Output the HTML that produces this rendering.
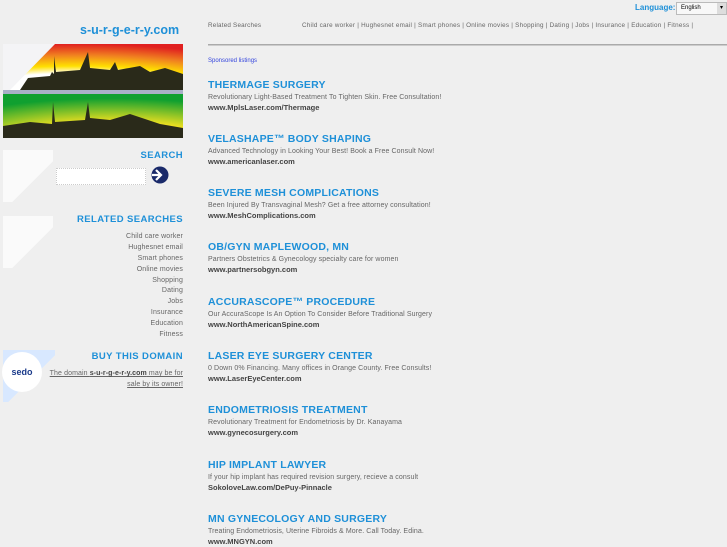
<!DOCTYPE html>
<html><head><meta charset="utf-8"><style>
body{margin:0;width:727px;height:545px;overflow:hidden;background:#efefef;font-family:"Liberation Sans",sans-serif;position:relative}
.a{position:absolute}
.r{text-align:right}
.h{color:#1e90d8;font-weight:bold;font-size:9.5px;letter-spacing:.4px}
.rs div{font-size:7px;color:#666;height:10.9px;line-height:10.9px;letter-spacing:.15px}
.t{font-size:10.5px;font-weight:bold;color:#1e90d8;letter-spacing:.2px;line-height:12px}
.d{font-size:7px;color:#666;margin-top:2px;line-height:9px;letter-spacing:.1px}
.u{font-size:7.5px;font-weight:bold;color:#444;margin-top:1px;line-height:10px}
.l{position:absolute;left:208px}
</style></head><body>
<div class="a" style="left:80px;top:23px;font-size:12.5px;font-weight:bold;color:#1e90d8">s-u-r-g-e-r-y.com</div>
<svg class="a" style="left:0;top:42px" width="186" height="100">
<defs><radialGradient id="g1" cx="0.4" cy="1.6" r="1.6"><stop offset="0.6" stop-color="#fff"/><stop offset="0.7" stop-color="#ffe000"/><stop offset="0.85" stop-color="#f08020"/><stop offset="1" stop-color="#e02020"/></radialGradient>
<radialGradient id="g2" cx="0.6" cy="1.3" r="1.2"><stop offset="0.35" stop-color="#fff"/><stop offset="0.55" stop-color="#f0e020"/><stop offset="1" stop-color="#10a030"/></radialGradient></defs>
<rect x="3" y="2" width="180" height="46" fill="url(#g1)"/>
<polygon points="3,2 55,2 10,48 3,48" fill="#f4f4f6"/>
<path d="M20 48 L28 36 L50 34 L52 30 L54 32 L54 14 L56 30 L80 28 L88 10 L90 26 L110 28 L115 20 L118 28 L140 24 L150 30 L165 26 L183 32 L183 48Z" fill="#2a2a1a"/>
<rect x="3" y="48" width="180" height="4" fill="#a9b0c8"/>
<rect x="3" y="52" width="180" height="44" fill="url(#g2)"/>
<path d="M3 96 L3 84 L30 80 L52 82 L53 60 L55 80 L85 78 L88 60 L90 76 L110 78 L130 72 L160 82 L183 86 L183 96Z" fill="#2a2a1a"/>
</svg>
<div class="a" style="left:3px;top:150px;width:50px;height:52px;background:linear-gradient(135deg,#fafafa 0,#fafafa 60%,#efefef 60%)"></div>
<div class="a r h" style="right:544px;top:150px">SEARCH</div>
<div class="a" style="left:56px;top:168px;width:88px;height:15px;background:#fff;border:1px dotted #ccc"></div>
<svg class="a" style="left:150px;top:166px" width="20" height="18"><circle cx="10" cy="9" r="8.5" fill="#1a2a6a"/><path d="M2 9h8M6 4l5 5-5 5" stroke="#fff" stroke-width="2.2" fill="none"/></svg>
<div class="a" style="left:3px;top:216px;width:50px;height:52px;background:linear-gradient(135deg,#fafafa 0,#fafafa 60%,#efefef 60%)"></div>
<div class="a r h" style="right:544px;top:214px">RELATED SEARCHES</div>
<div class="a r rs" style="right:544px;top:232px"><div>Child care worker</div><div>Hughesnet email</div><div>Smart phones</div><div>Online movies</div><div>Shopping</div><div>Dating</div><div>Jobs</div><div>Insurance</div><div>Education</div><div>Fitness</div></div>
<div class="a" style="left:3px;top:350px;width:52px;height:52px;background:linear-gradient(135deg,#d8e8ff 0,#d8e8ff 55%,#efefef 55%)"></div>
<div class="a" style="left:2px;top:352px;width:40px;height:40px;border-radius:50%;background:#fff;font-size:9px;font-weight:bold;color:#1a3a8a;text-align:center;line-height:40px">sedo</div>
<div class="a r h" style="right:544px;top:351px">BUY THIS DOMAIN</div>
<div class="a r" style="right:544px;top:368px;font-size:7px;color:#666;line-height:11px;text-decoration:underline;letter-spacing:.1px">The domain <b style="color:#444">s-u-r-g-e-r-y.com</b> may be for<br>sale by its owner!</div>
<div class="a" style="left:635px;top:3px;font-size:8px;font-weight:bold;color:#1e90d8">Language:</div>
<div class="a" style="left:676px;top:2px;width:49px;height:11px;background:#f8f8f8;border:1px solid #bbb;font-size:6px;line-height:11px;text-indent:4px">English<span style="position:absolute;right:0;top:0;width:9px;height:11px;background:#ddd;text-align:center;text-indent:0">▾</span></div>
<div class="a" style="left:208px;top:22px;font-size:6.3px;color:#666;letter-spacing:.2px">Related Searches</div>
<div class="a" style="left:302px;top:22px;font-size:6.3px;color:#666;letter-spacing:.25px;white-space:nowrap">Child care worker | Hughesnet email | Smart phones | Online movies | Shopping | Dating | Jobs | Insurance | Education | Fitness |</div>
<div class="a" style="left:208px;top:44px;width:519px;height:1px;background:#aaa;border-bottom:1px solid #ccc"></div>
<div class="a" style="left:208px;top:58px;font-size:6px;color:#3344dd">Sponsored listings</div>
<div class="l" style="top:79px"><div class="t">THERMAGE SURGERY</div><div class="d">Revolutionary Light-Based Treatment To Tighten Skin. Free Consultation!</div><div class="u">www.MplsLaser.com/Thermage</div></div>
<div class="l" style="top:133px"><div class="t">VELASHAPE™ BODY SHAPING</div><div class="d">Advanced Technology in Looking Your Best! Book a Free Consult Now!</div><div class="u">www.americanlaser.com</div></div>
<div class="l" style="top:187px"><div class="t">SEVERE MESH COMPLICATIONS</div><div class="d">Been Injured By Transvaginal Mesh? Get a free attorney consultation!</div><div class="u">www.MeshComplications.com</div></div>
<div class="l" style="top:241px"><div class="t">OB/GYN MAPLEWOOD, MN</div><div class="d">Partners Obstetrics &amp; Gynecology specialty care for women</div><div class="u">www.partnersobgyn.com</div></div>
<div class="l" style="top:296px"><div class="t">ACCURASCOPE™ PROCEDURE</div><div class="d">Our AccuraScope Is An Option To Consider Before Traditional Surgery</div><div class="u">www.NorthAmericanSpine.com</div></div>
<div class="l" style="top:350px"><div class="t">LASER EYE SURGERY CENTER</div><div class="d">0 Down 0% Financing. Many offices in Orange County. Free Consults!</div><div class="u">www.LaserEyeCenter.com</div></div>
<div class="l" style="top:404px"><div class="t">ENDOMETRIOSIS TREATMENT</div><div class="d">Revolutionary Treatment for Endometriosis by Dr. Kanayama</div><div class="u">www.gynecosurgery.com</div></div>
<div class="l" style="top:459px"><div class="t">HIP IMPLANT LAWYER</div><div class="d">If your hip implant has required revision surgery, recieve a consult</div><div class="u">SokoloveLaw.com/DePuy-Pinnacle</div></div>
<div class="l" style="top:513px"><div class="t">MN GYNECOLOGY AND SURGERY</div><div class="d">Treating Endometriosis, Uterine Fibroids &amp; More. Call Today. Edina.</div><div class="u">www.MNGYN.com</div></div>
</body></html>
